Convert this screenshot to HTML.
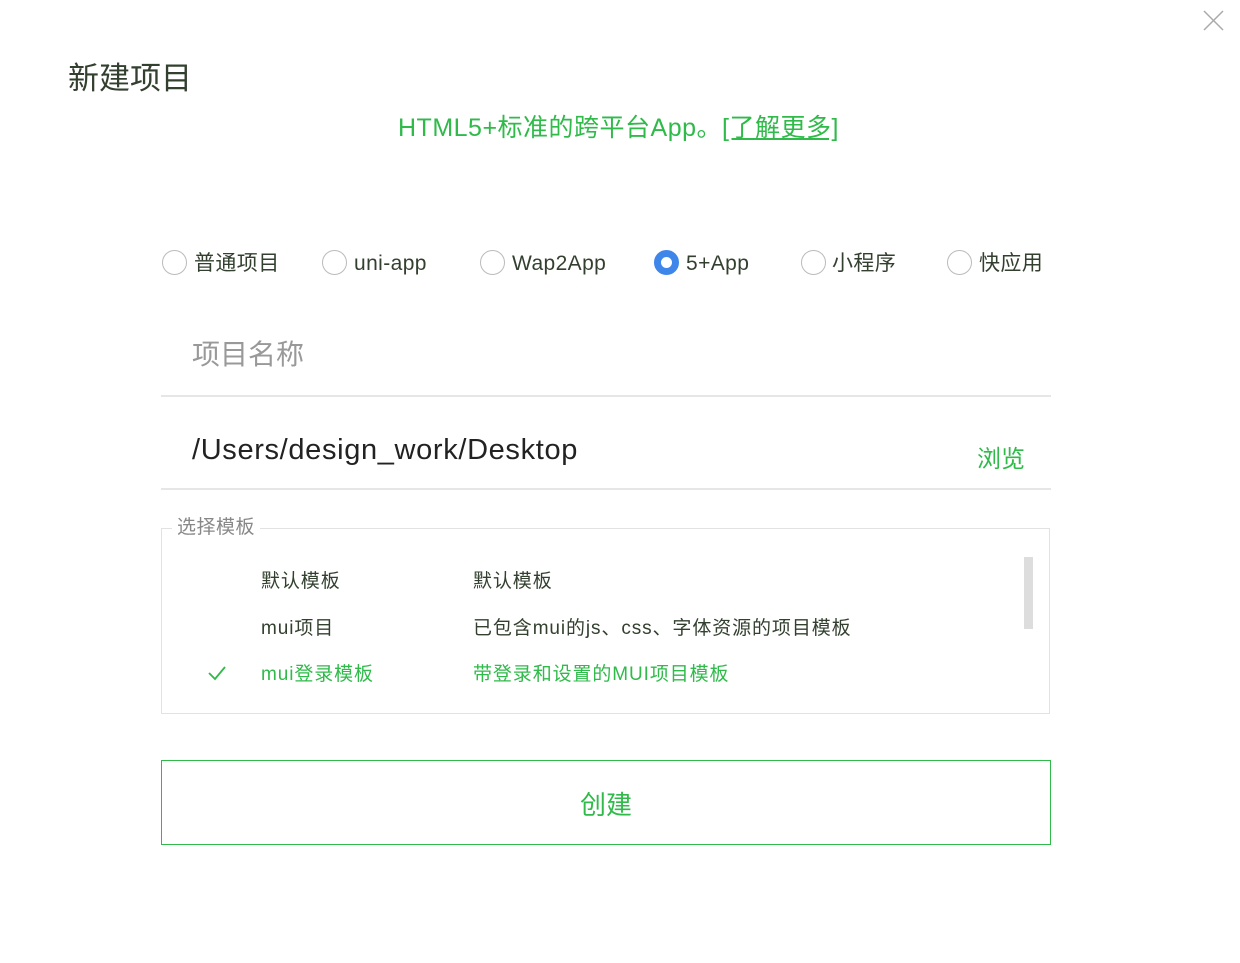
<!DOCTYPE html>
<html><head><meta charset="utf-8"><style>
*{margin:0;padding:0;box-sizing:border-box}
body{width:1240px;height:963px;background:#fff;position:relative;overflow:hidden;font-family:"Liberation Sans","Noto Sans CJK SC",sans-serif;color:#33402f}
.a{position:absolute;white-space:nowrap;line-height:1}
.g{color:#2fba4a}
.r{position:absolute;top:250px;width:25px;height:25px;border:1px solid #bbb;border-radius:50%}
.rl{position:absolute;top:252px;font-size:21px;line-height:24px;letter-spacing:0.4px}
.line{position:absolute;left:161px;width:890px;height:2px;background:#e6e6e6}
.t{font-size:19px;letter-spacing:0.9px}
</style></head><body>
<svg class="a" style="left:1203px;top:10px" width="21" height="21"><path d="M1 1L20 20M20 1L1 20" stroke="#aaa" stroke-width="1.5"/></svg>
<div class="a" style="left:68px;top:63px;font-size:31px">新建项目</div>
<div class="a g" style="left:398px;top:116px;font-size:25px;letter-spacing:0.5px">HTML5+标准的跨平台App。<span style="text-decoration:underline">[了解更多]</span></div>

<div class="r" style="left:162px"></div><div class="rl" style="left:194px">普通项目</div>
<div class="r" style="left:322px"></div><div class="rl" style="left:354px">uni-app</div>
<div class="r" style="left:480px"></div><div class="rl" style="left:512px">Wap2App</div>
<div class="r" style="left:654px;border:7px solid #3f86ea;background:#fff"></div><div class="rl" style="left:686px">5+App</div>
<div class="r" style="left:801px"></div><div class="rl" style="left:832px">小程序</div>
<div class="r" style="left:947px"></div><div class="rl" style="left:979px">快应用</div>

<div class="a" style="left:192px;top:341px;font-size:28px;color:#999">项目名称</div>
<div class="line" style="top:395px"></div>
<div class="a" style="left:192px;top:436px;font-size:29px;color:#222;letter-spacing:0.65px">/Users/design_work/Desktop</div>
<div class="a g" style="left:977px;top:448px;font-size:24px">浏览</div>
<div class="line" style="top:488px"></div>

<div style="position:absolute;left:161px;top:528px;width:889px;height:186px;border:1px solid #e2e2e2"></div>
<div class="a" style="left:172px;top:518px;padding:0 5px;background:#fff;font-size:19px;color:#888;letter-spacing:0.5px">选择模板</div>
<div style="position:absolute;left:1024px;top:557px;width:9px;height:72px;background:#ddd"></div>
<div class="a t" style="left:261px;top:572px">默认模板</div>
<div class="a t" style="left:473px;top:572px">默认模板</div>
<div class="a t" style="left:261px;top:619px">mui项目</div>
<div class="a t" style="left:473px;top:619px">已包含mui的js、css、字体资源的项目模板</div>
<svg class="a" style="left:207px;top:665px" width="20" height="16"><path d="M2 8L8 14L18 2" stroke="#2fba4a" stroke-width="1.8" fill="none"/></svg>
<div class="a g t" style="left:261px;top:665px">mui登录模板</div>
<div class="a g t" style="left:473px;top:665px">带登录和设置的MUI项目模板</div>

<div style="position:absolute;left:161px;top:760px;width:890px;height:85px;border:1px solid #2fba4a"></div>
<div class="a g" style="left:580px;top:792px;font-size:26px">创建</div>
</body></html>
